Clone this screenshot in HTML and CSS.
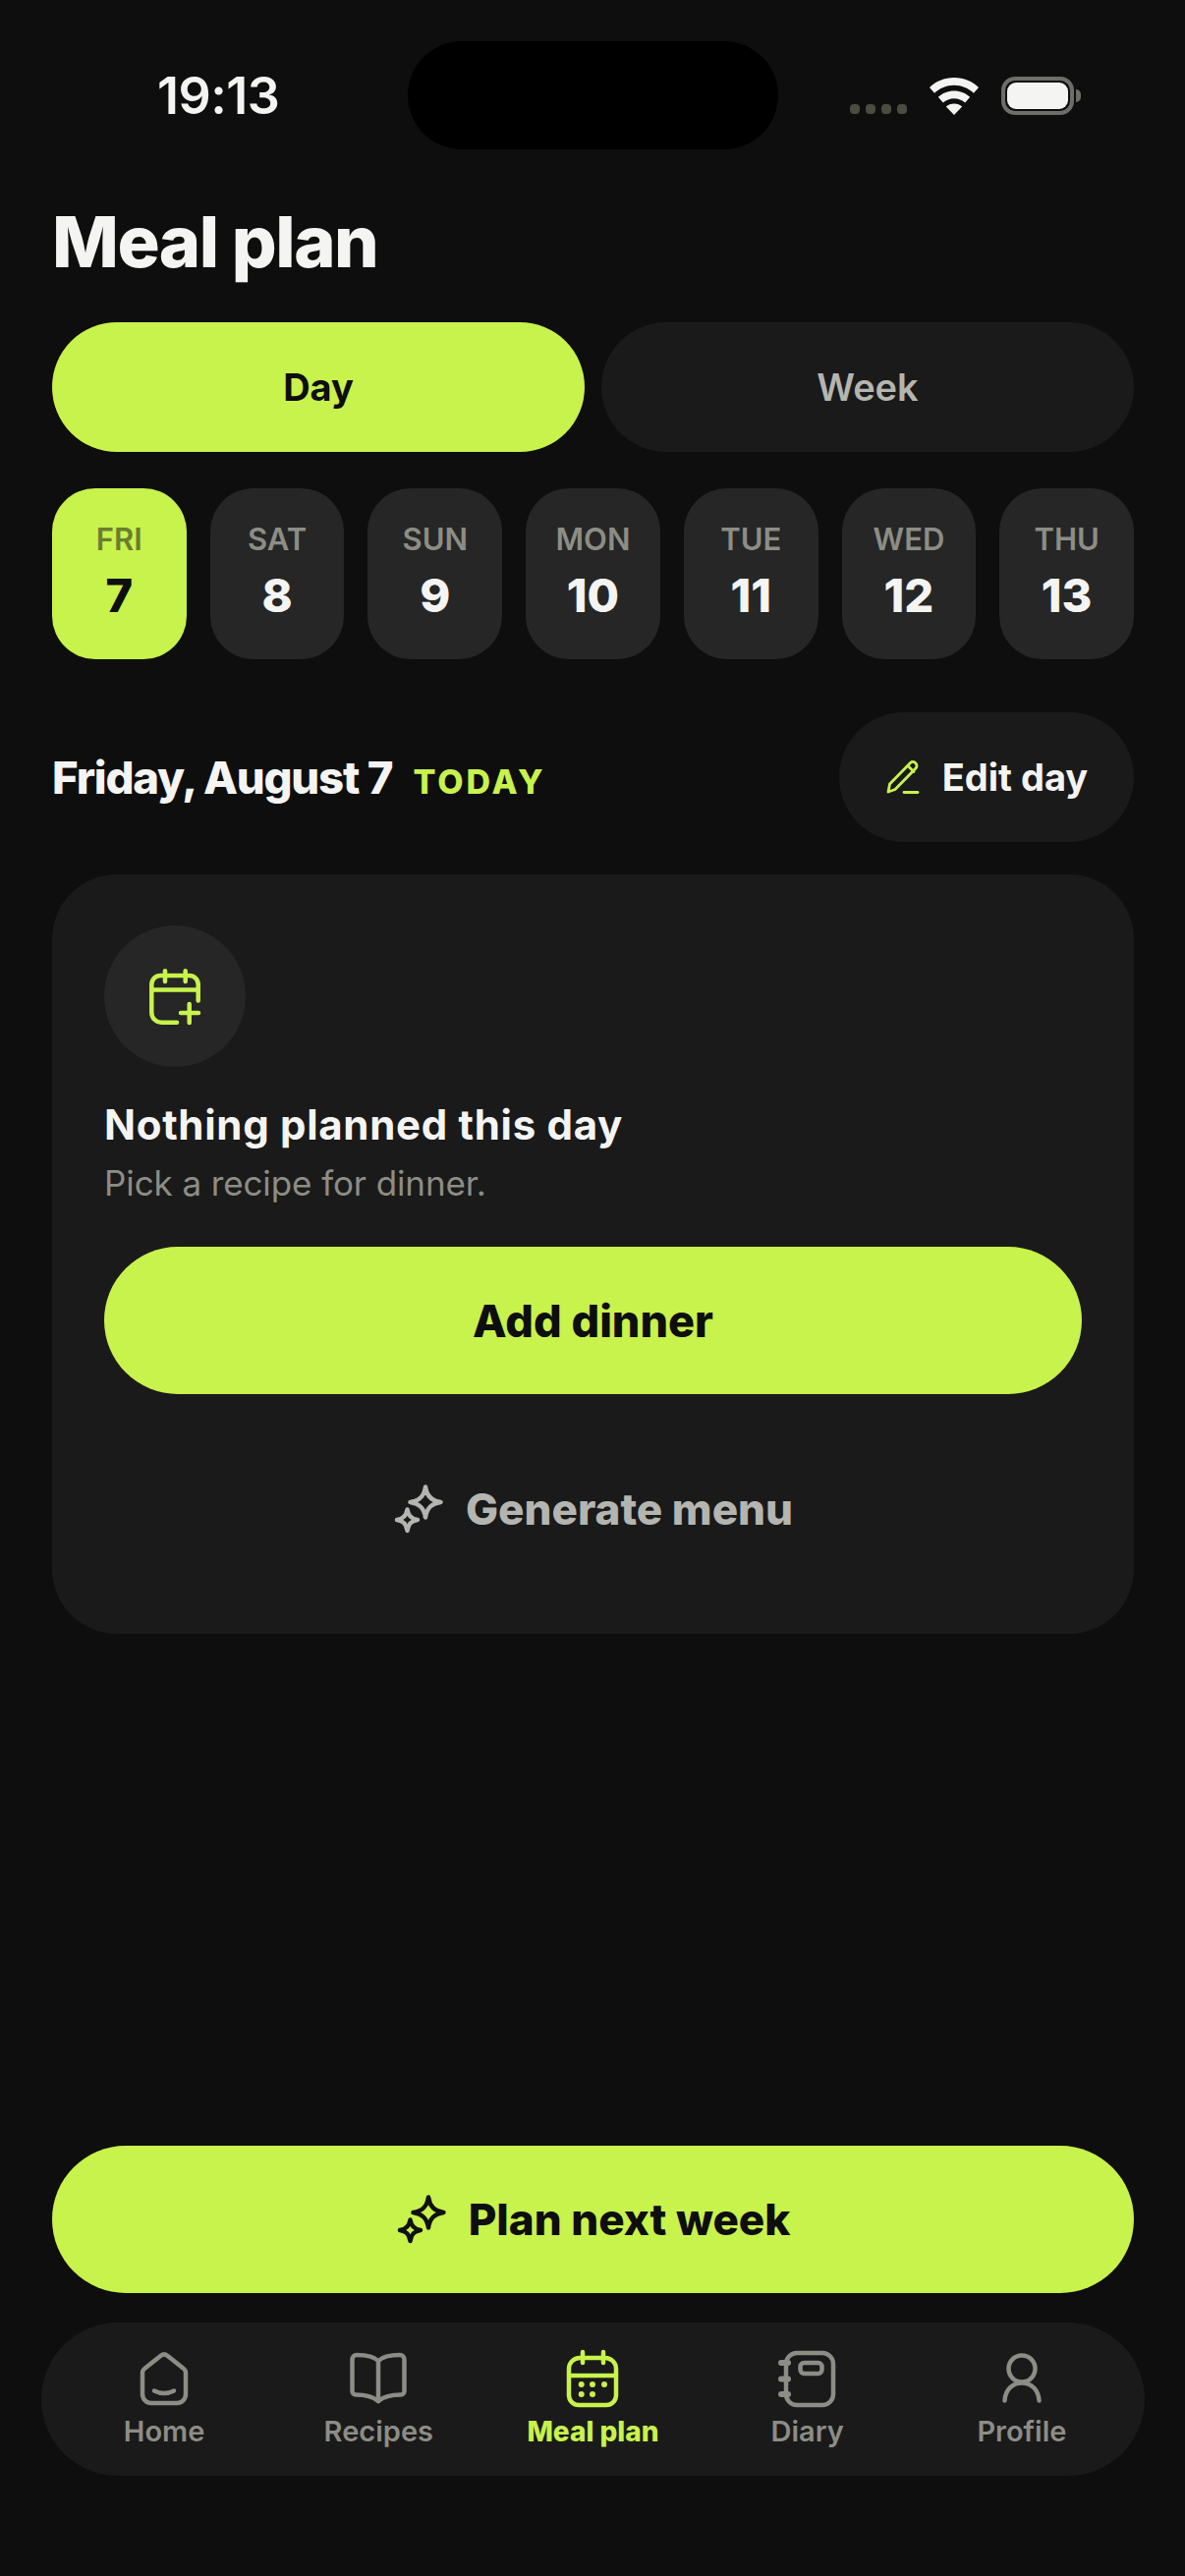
FILE: index.html
```html
<!DOCTYPE html>
<html lang="en">
<head>
    <meta charset="UTF-8">
    <meta name="viewport" content="width=device-width, initial-scale=1.0">
    <title>Meal plan</title>
    <link rel="stylesheet" href="styles.css">
</head>
<body>
    <div class="phone">
        <div class="status-bar">
            <span class="status-time">19:13</span>
            <div class="island"></div>
            <div class="status-icons">
                <div class="signal"><i></i><i></i><i></i><i></i></div>
                <svg class="wifi" width="52" height="38" viewBox="0 0 52 38">
                    <path fill="#f4f4f2" d="M26 0C16 0 7.500 3.800 1 10l5 5.800C11.300 10.800 18.300 7.800 26 7.800s14.700 3 20 8l5-5.800C44.500 3.800 36 0 26 0z"/>
                    <path fill="#f4f4f2" d="M26 13.500c-6.300 0-12 2.400-16.200 6.300l5 5.800c3-2.700 7-4.400 11.200-4.400s8.200 1.700 11.200 4.400l5-5.800C38 15.900 32.300 13.500 26 13.500z"/>
                    <path fill="#f4f4f2" d="M26 26.500c-3.200 0-6 1.100-8.200 3L26 38l8.200-8.500c-2.200-1.900-5-3-8.200-3z"/>
                </svg>
                <div class="battery"><div class="battery-level"></div></div>
            </div>
        </div>

        <h1 class="page-title">Meal plan</h1>

        <div class="segments">
            <button class="segment segment-active">Day</button>
            <button class="segment">Week</button>
        </div>

        <div class="days">
            <div class="day day-active"><span class="day-name">FRI</span><span class="day-num">7</span></div>
            <div class="day"><span class="day-name">SAT</span><span class="day-num">8</span></div>
            <div class="day"><span class="day-name">SUN</span><span class="day-num">9</span></div>
            <div class="day"><span class="day-name">MON</span><span class="day-num">10</span></div>
            <div class="day"><span class="day-name">TUE</span><span class="day-num">11</span></div>
            <div class="day"><span class="day-name">WED</span><span class="day-num">12</span></div>
            <div class="day"><span class="day-name">THU</span><span class="day-num">13</span></div>
        </div>

        <div class="date-row">
            <div class="date-label">
                <span class="date-text">Friday, August 7</span>
                <span class="date-today">TODAY</span>
            </div>
            <button class="edit-btn">
                <svg width="36" height="36" viewBox="0 0 36 36" fill="none" stroke="#c8f24c" stroke-width="2.800" stroke-linecap="round" stroke-linejoin="round">
                    <path d="M3 33l1.500-8L25.500 3.500a3.600 3.600 0 0 1 5 0l.5.500a3.600 3.600 0 0 1 0 5L10 30.500z"/>
                    <path d="M23 6.500l6 6"/>
                    <path d="M19 33.500h14"/>
                </svg>
                Edit day
            </button>
        </div>

        <div class="empty-card">
            <div class="empty-icon">
                <svg width="60" height="64" viewBox="0 0 60 64" fill="none" stroke="#c8f24c" stroke-width="4.500" stroke-linecap="round" stroke-linejoin="round">
                    <path d="M53.700 36.500V20a9 9 0 0 0-9-9H15.300a9 9 0 0 0-9 9v28.700a10 10 0 0 0 10 10H32"/>
                    <path d="M6.300 25.500h47.400"/>
                    <path d="M20 6.300V17"/>
                    <path d="M40.700 6.300V17"/>
                    <path d="M36 49h18"/>
                    <path d="M44.700 40v19"/>
                </svg>
            </div>
            <h2 class="empty-title">Nothing planned this day</h2>
            <p class="empty-sub">Pick a recipe for dinner.</p>
            <button class="btn-primary btn-add">Add dinner</button>
            <button class="btn-generate">
                <svg class="sparkle" width="52" height="52" viewBox="0 0 52 52" fill="none" stroke="#b4b5b0" stroke-width="4.500" stroke-linejoin="round">
                    <path d="M33 3.500C34.300 13 39 17.700 48.500 19C39 20.500 34.300 25 33 34.500C31.500 25 27 20.500 17.500 19C27 17.700 31.500 13 33 3.500z"/>
                    <path d="M14.500 26.500C15.500 33 18.500 36 25 37C18.500 38 15.500 41 14.500 48C13.500 41 10.500 38 4 37C10.500 36 13.500 33 14.500 26.500z"/>
                </svg>
                Generate menu
            </button>
        </div>

        <button class="btn-primary btn-plan">
            <svg class="sparkle" width="52" height="52" viewBox="0 0 52 52" fill="none" stroke="#111" stroke-width="4.500" stroke-linejoin="round">
                <path d="M33 3.500C34.300 13 39 17.700 48.500 19C39 20.500 34.300 25 33 34.500C31.500 25 27 20.500 17.500 19C27 17.700 31.500 13 33 3.500z"/>
                <path d="M14.500 26.500C15.500 33 18.500 36 25 37C18.500 38 15.500 41 14.500 48C13.500 41 10.500 38 4 37C10.500 36 13.500 33 14.500 26.500z"/>
            </svg>
            Plan next week
        </button>

        <nav class="tab-bar">
            <div class="tab">
                <svg width="60" height="62" viewBox="0 0 60 62" fill="none" stroke="#8c8d85" stroke-width="4.500" stroke-linecap="round" stroke-linejoin="round">
                    <path d="M8 25a5 5 0 0 1 2-4L27 7.500a5 5 0 0 1 6 0L50 21a5 5 0 0 1 2 4v22a9 9 0 0 1-9 9H17a9 9 0 0 1-9-9z"/>
                    <path d="M20 43.500q10 5 20 0"/>
                </svg>
                <span>Home</span>
            </div>
            <div class="tab">
                <svg width="60" height="62" viewBox="0 0 60 62" fill="none" stroke="#8c8d85" stroke-width="4.500" stroke-linecap="round" stroke-linejoin="round">
                    <path d="M30 13C25 8 16 7 8 7a4.500 4.500 0 0 0-4.500 4.500V44A3.500 3.500 0 0 0 7 47.500C15 47.500 24 49 30 54C36 49 45 47.500 53 47.500A3.500 3.500 0 0 0 56.500 44V11.500A4.500 4.500 0 0 0 52 7C44 7 35 8 30 13z"/>
                    <path d="M30 13v41"/>
                </svg>
                <span>Recipes</span>
            </div>
            <div class="tab tab-active">
                <svg width="60" height="62" viewBox="0 0 60 62" fill="none" stroke="#c8f24c" stroke-width="4.500" stroke-linecap="round" stroke-linejoin="round">
                    <path d="M6 21a11 11 0 0 1 11-11h26a11 11 0 0 1 11 11v27a10 10 0 0 1-10 10H16A10 10 0 0 1 6 48z"/>
                    <path d="M6 28h48"/>
                    <path d="M20 4v11"/>
                    <path d="M41 4v11"/>
                    <g fill="#c8f24c" stroke="none">
                        <circle cx="18.700" cy="37" r="3"/>
                        <circle cx="30" cy="37" r="3"/>
                        <circle cx="42" cy="37" r="3"/>
                        <circle cx="18.700" cy="47" r="3"/>
                        <circle cx="30" cy="47" r="3"/>
                    </g>
                </svg>
                <span>Meal plan</span>
            </div>
            <div class="tab">
                <svg width="60" height="62" viewBox="0 0 60 62" fill="none" stroke="#8c8d85" stroke-width="4.500" stroke-linecap="round" stroke-linejoin="round">
                    <rect x="8" y="5" width="48" height="53" rx="11"/>
                    <rect x="22.500" y="15" width="22" height="11" rx="4"/>
                    <g stroke-width="6">
                        <path d="M3 15h7"/>
                        <path d="M3 31.500h7"/>
                        <path d="M3 47h7"/>
                    </g>
                </svg>
                <span>Diary</span>
            </div>
            <div class="tab">
                <svg width="60" height="62" viewBox="0 0 60 62" fill="none" stroke="#8c8d85" stroke-width="4.500" stroke-linecap="round" stroke-linejoin="round">
                    <circle cx="30" cy="21" r="13.500"/>
                    <path d="M12.500 53.500C13 43 20 35.500 30 35.500S47 43 47.500 53.500"/>
                </svg>
                <span>Profile</span>
            </div>
        </nav>
    </div>
</body>
</html>
```

FILE: styles.css
```css
* {
    box-sizing: border-box;
}

body {
    margin: 0;
    background-color: #0e0e0e;
    font-family: Inter, "Liberation Sans", sans-serif;
    color: #f4f4f2;
}

button {
    font-family: inherit;
    border: none;
    cursor: pointer;
}

.phone {
    width: 1206px;
    height: 2622px;
    padding: 0 52px 102px 53px;
    display: flex;
    flex-direction: column;
    overflow: hidden;
}

/* status bar */
.status-bar {
    height: 152px;
    margin: 0 -52px 0 -53px;
    padding-top: 42px;
    display: flex;
    align-items: flex-start;
}

.status-time {
    width: 415px;
    padding: 28px 0 0 160px;
    font-size: 52px;
    line-height: 56px;
    font-weight: 600;
    letter-spacing: -.5px;
}

.island {
    width: 377px;
    height: 110px;
    border-radius: 55px;
    background: #000;
}

.status-icons {
    margin-left: 73px;
    padding-top: 36px;
    display: flex;
    align-items: flex-end;
}

.signal {
    display: flex;
    gap: 6px;
    margin-right: 22px;
    margin-bottom: 1px;
}

.signal i {
    width: 10px;
    height: 10px;
    border-radius: 4px;
    background: #4a4c40;
}

.wifi {
    margin-right: 22px;
}

.battery {
    position: relative;
    width: 74px;
    height: 39px;
    padding: 2px;
    border: 4px solid #6d6d6a;
    border-radius: 14px;
}

.battery::after {
    content: "";
    position: absolute;
    right: -11px;
    top: 9px;
    width: 5px;
    height: 13px;
    border-radius: 0 5px 5px 0;
    background: #6d6d6a;
}

.battery-level {
    height: 100%;
    border-radius: 9px;
    background: #f4f4f2;
}

.page-title {
    margin: 52px 0 40px;
    font-size: 72px;
    line-height: 84px;
    font-weight: 800;
    letter-spacing: -1.500px;
}

/* day / week switch */
.segments {
    display: grid;
    grid-template-columns: 1fr 1fr;
    gap: 17px;
}

.segment {
    height: 132px;
    border-radius: 66px;
    background: #1a1a1a;
    color: #b4b5b0;
    font-size: 38px;
    font-weight: 600;
}

.segment-active {
    background: #c8f24c;
    color: #0e0e0e;
    font-weight: 700;
}

/* day strip */
.days {
    margin-top: 37px;
    display: grid;
    grid-template-columns: repeat(7, 1fr);
    gap: 24px;
}

.day {
    height: 174px;
    border-radius: 44px;
    background: #262626;
    display: flex;
    flex-direction: column;
    align-items: center;
    padding-top: 34px;
}

.day-name {
    font-size: 31px;
    line-height: 36px;
    font-weight: 600;
    color: #8c8d85;
}

.day-num {
    margin-top: 12px;
    font-size: 47px;
    line-height: 54px;
    font-weight: 800;
}

.day-active {
    background: #c8f24c;
    color: #0e0e0e;
}

.day-active .day-name {
    color: #6c7c30;
}

/* selected date */
.date-row {
    margin-top: 54px;
    display: flex;
    justify-content: space-between;
    align-items: center;
}

.date-label {
    display: flex;
    align-items: baseline;
    gap: 21px;
}

.date-text {
    font-size: 45.500px;
    font-weight: 800;
    letter-spacing: -1.200px;
}

.date-today {
    font-size: 34px;
    font-weight: 800;
    letter-spacing: 3px;
    color: #c8f24c;
}

.edit-btn {
    width: 300px;
    height: 132px;
    border-radius: 66px;
    background: #1a1a1a;
    color: #f4f4f2;
    font-size: 38px;
    font-weight: 700;
    display: flex;
    align-items: center;
    justify-content: center;
    gap: 22px;
}

/* empty state */
.empty-card {
    margin-top: 33px;
    height: 773px;
    padding: 52px 53px 0;
    border-radius: 66px;
    background: #1a1a1a;
}

.empty-icon {
    width: 144px;
    height: 144px;
    border-radius: 50%;
    background: #262626;
    display: flex;
    align-items: center;
    justify-content: center;
}

.empty-title {
    margin: 34px 0 0;
    font-size: 42px;
    line-height: 50px;
    font-weight: 700;
    letter-spacing: .7px;
}

.empty-sub {
    margin: 12px 0 0;
    font-size: 35px;
    line-height: 44px;
    letter-spacing: -.1px;
    color: #8c8d85;
}

.btn-primary {
    width: 100%;
    height: 150px;
    border-radius: 75px;
    background: #c8f24c;
    color: #0e0e0e;
    font-size: 44px;
    font-weight: 800;
    display: flex;
    align-items: center;
    justify-content: center;
}

.btn-add {
    margin-top: 43px;
    font-size: 45px;
}

.btn-generate {
    width: 100%;
    height: 100px;
    margin-top: 67px;
    background: none;
    color: #b4b5b0;
    font-size: 44px;
    font-weight: 800;
    display: flex;
    align-items: center;
    justify-content: center;
    gap: 22px;
}

.btn-plan {
    margin-top: auto;
    gap: 22px;
}

/* bottom navigation */
.tab-bar {
    margin: 30px -11px 0;
    height: 156px;
    padding: 26px 16px 0;
    border-radius: 78px;
    background: #1a1a1a;
    display: grid;
    grid-template-columns: repeat(5, 1fr);
}

.tab {
    display: flex;
    flex-direction: column;
    align-items: center;
    color: #8c8d85;
    font-size: 29px;
    line-height: 34px;
    font-weight: 600;
}

.tab span {
    margin-top: 6px;
}

.tab-active {
    color: #c8f24c;
    font-weight: 800;
    font-size: 28px;
}
```
